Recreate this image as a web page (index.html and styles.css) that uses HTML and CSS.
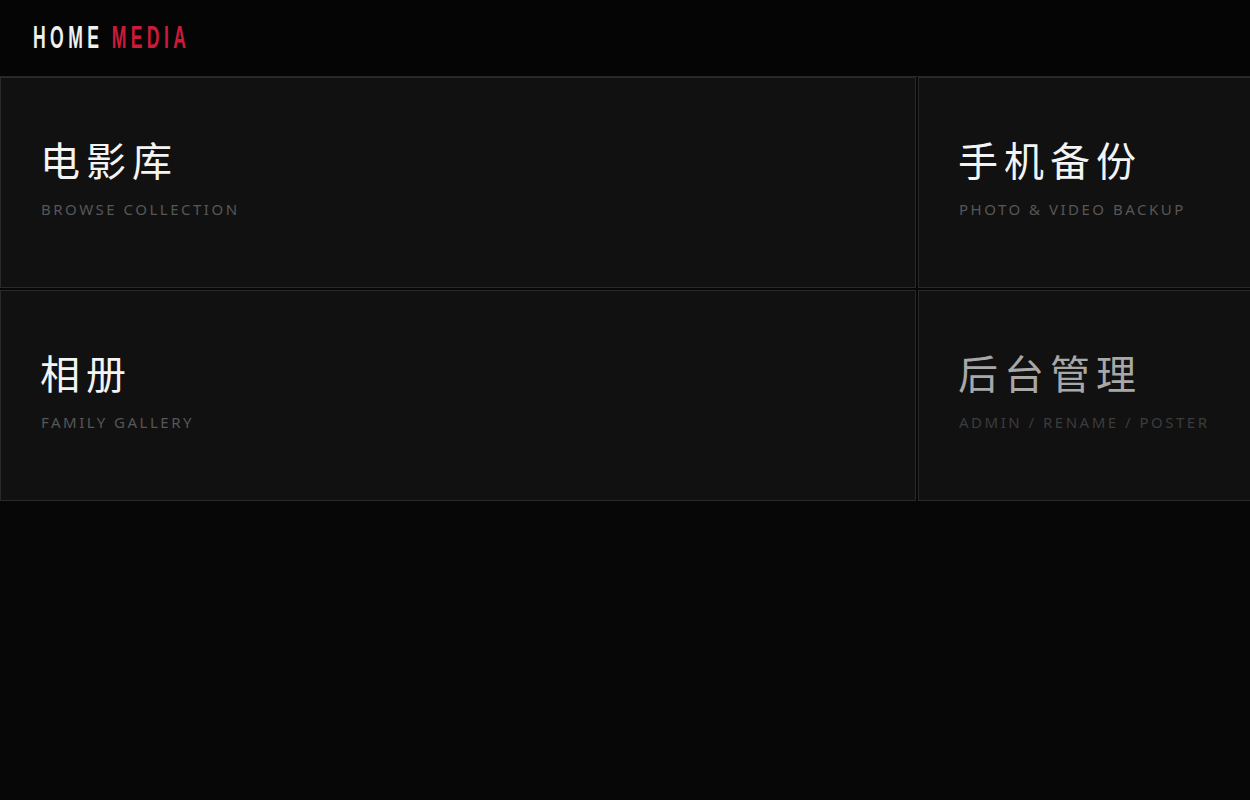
FILE: index.html
```html
<!DOCTYPE html>
<html lang="zh-CN">
<head>
<meta charset="utf-8">
<title>Home Media</title>
<link rel="stylesheet" href="styles.css">
</head>
<body>
<header class="topbar">
  <div class="logo"><span class="logo-home">HOME</span><span class="logo-media">MEDIA</span></div>
</header>
<main class="grid">
  <a class="card" href="#">
    <div class="card-title">电影库</div>
    <div class="card-sub">BROWSE COLLECTION</div>
  </a>
  <a class="card card-edge" href="#">
    <div class="card-title">手机备份</div>
    <div class="card-sub">PHOTO &amp; VIDEO BACKUP</div>
  </a>
  <a class="card" href="#">
    <div class="card-title">相册</div>
    <div class="card-sub">FAMILY GALLERY</div>
  </a>
  <a class="card card-edge card-dim" href="#">
    <div class="card-title">后台管理</div>
    <div class="card-sub">ADMIN / RENAME / POSTER</div>
  </a>
</main>
</body>
</html>
```
FILE: styles.css
```css
html, body {
  margin: 0;
  padding: 0;
  background: #070707;
  overflow: hidden;
  height: 100%;
}
body {
  font-family: "Noto Sans", "Noto Sans CJK SC", sans-serif;
  color: #fff;
}
.topbar {
  height: 76px;
  background: #050505;
  border-bottom: 1px solid #262626;
  display: flex;
  align-items: center;
  padding-left: 33px;
}
.logo {
  display: flex;
  gap: 15px;
  font-family: "Liberation Sans", "Arial", sans-serif;
  font-weight: 700;
  font-size: 32px;
  letter-spacing: 8px;
  line-height: 1;
  transform: scaleX(0.55);
  transform-origin: left center;
  margin-top: -3px;
  white-space: nowrap;
}
.logo-home { color: #f0f0f0; }
.logo-media { color: #cc1a3a; }
.grid {
  display: grid;
  grid-template-columns: 916px 1fr;
  grid-auto-rows: 211px;
  gap: 2px;
}
.card {
  background: #111111;
  border: 1px solid #2a2a2a;
  display: flex;
  flex-direction: column;
  justify-content: center;
  padding: 0 40px;
  text-decoration: none;
  color: inherit;
  white-space: nowrap;
  overflow: hidden;
}
.card-edge {
  border-right: none;
}
.card-title {
  font-family: "Noto Sans CJK SC", sans-serif;
  font-size: 40px;
  font-weight: 400;
  letter-spacing: 6px;
  color: #f4f4f4;
  line-height: 1.2;
  margin-left: -1px;
  margin-top: -12px;
}
.card-sub {
  font-family: "Noto Sans", sans-serif;
  font-size: 15px;
  letter-spacing: 2.5px;
  color: #575757;
  margin-top: 16px;
}
.card-dim .card-title { color: #a8a8a8; }
.card-dim .card-sub { color: #3c3c3c; }
```
